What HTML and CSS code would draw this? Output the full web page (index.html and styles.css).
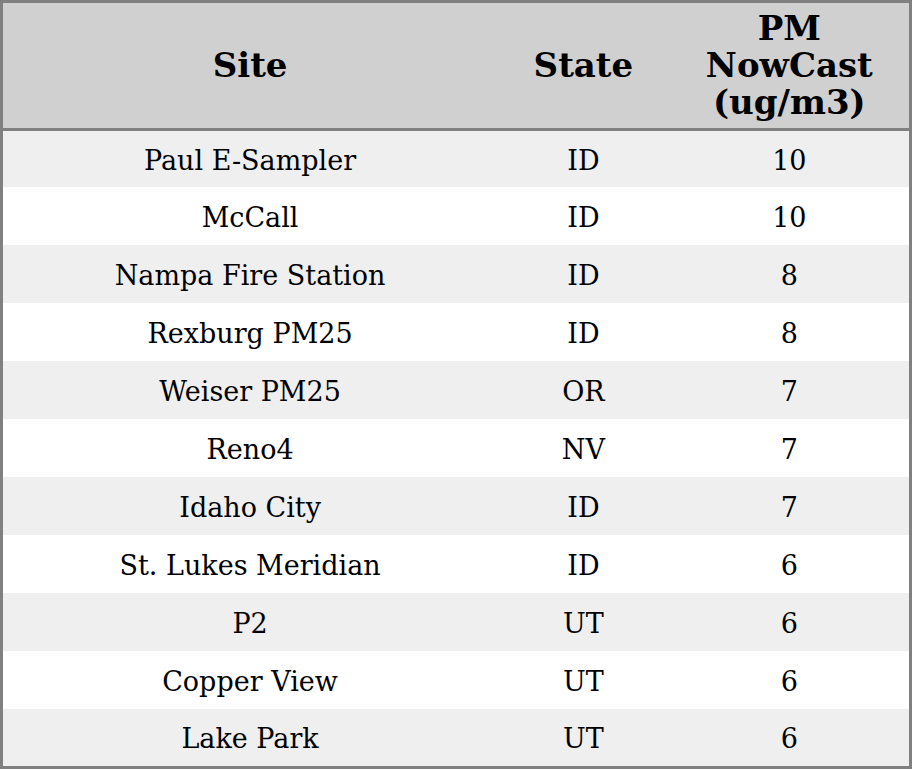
FILE: index.html
```html
<!DOCTYPE html>
<html>
<head>
<meta charset="utf-8">
<link rel="stylesheet" href="styles.css">
</head>
<body>
<table class="aq-table">
  <colgroup>
    <col class="col-site">
    <col class="col-state">
    <col class="col-pm">
  </colgroup>
  <thead>
    <tr>
      <th>Site</th>
      <th>State</th>
      <th>PM<br>NowCast<br>(ug/m3)</th>
    </tr>
  </thead>
  <tbody>
    <tr><td>Paul E-Sampler</td><td>ID</td><td>10</td></tr>
    <tr><td>McCall</td><td>ID</td><td>10</td></tr>
    <tr><td>Nampa Fire Station</td><td>ID</td><td>8</td></tr>
    <tr><td>Rexburg PM25</td><td>ID</td><td>8</td></tr>
    <tr><td>Weiser PM25</td><td>OR</td><td>7</td></tr>
    <tr><td>Reno4</td><td>NV</td><td>7</td></tr>
    <tr><td>Idaho City</td><td>ID</td><td>7</td></tr>
    <tr><td>St. Lukes Meridian</td><td>ID</td><td>6</td></tr>
    <tr><td>P2</td><td>UT</td><td>6</td></tr>
    <tr><td>Copper View</td><td>UT</td><td>6</td></tr>
    <tr><td>Lake Park</td><td>UT</td><td>6</td></tr>
  </tbody>
</table>
</body>
</html>
```
FILE: styles.css
```css
html, body {
  margin: 0;
  padding: 0;
  background: #ffffff;
}
.aq-table {
  width: 912px;
  border-collapse: collapse;
  border: 3px solid #808080;
  font-family: "DejaVu Serif", serif;
  color: #000;
  table-layout: fixed;
}
.col-site { width: 494px; }
.col-state { width: 172px; }
.col-pm { width: 240px; }
.aq-table th {
  background: #d0d0d0;
  font-size: 34px;
  font-weight: bold;
  line-height: 37px;
  height: 125px;
  padding: 0;
  text-align: center;
  vertical-align: middle;
  border-bottom: 3px solid #808080;
}
.aq-table td {
  font-size: 27px;
  height: 56px;
  padding: 2px 0 0;
  text-align: center;
  vertical-align: middle;
}
.aq-table tbody tr:first-child td {
  height: 53px;
  padding-top: 3px;
}
.aq-table tbody tr:last-child td {
  height: 55px;
}
.aq-table tbody tr:nth-child(odd) td {
  background: #efefef;
}
```
